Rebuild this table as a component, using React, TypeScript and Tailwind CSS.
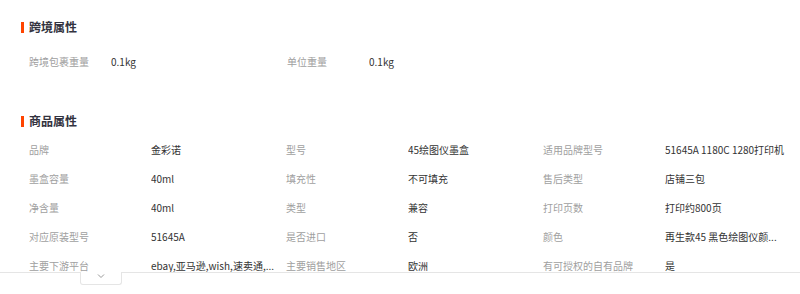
import React from "react";

const font = { fontFamily: '"Microsoft YaHei", "Noto Sans CJK SC", "Noto Sans", sans-serif' };

function Header({ title }: { title: string }) {
  return (
    <div className="flex items-center h-[20px] pl-[21px]">
      <span className="w-[3px] h-[11px] bg-[#ff4400] mr-[5px]" />
      <span className="text-[12px] font-bold text-[#333340] leading-[20px]">{title}</span>
    </div>
  );
}

type Item = [string, string];

function Cell({ item, labelW }: { item: Item; labelW: string }) {
  return (
    <div className="flex w-[258px] items-center">
      <span className={`${labelW} shrink-0 text-[#a0a0a0] whitespace-nowrap`}>{item[0]}</span>
      <span className="w-[134px] whitespace-nowrap overflow-hidden text-[#333333]">{item[1]}</span>
    </div>
  );
}

const cross: Item[] = [
  ["跨境包裹重量", "0.1kg"],
  ["单位重量", "0.1kg"],
];

const goods: Item[][] = [
  [["品牌", "金彩诺"], ["型号", "45绘图仪墨盒"], ["适用品牌型号", "51645A 1180C 1280打印机"]],
  [["墨盒容量", "40ml"], ["填充性", "不可填充"], ["售后类型", "店铺三包"]],
  [["净含量", "40ml"], ["类型", "兼容"], ["打印页数", "打印约800页"]],
  [["对应原装型号", "51645A"], ["是否进口", "否"], ["颜色", "再生款45 黑色绘图仪颜..."]],
  [["主要下游平台", "ebay,亚马逊,wish,速卖通,..."], ["主要销售地区", "欧洲"], ["有可授权的自有品牌", "是"]],
];

export default function App() {
  return (
    <div className="w-[800px] h-[294px] bg-white overflow-hidden text-[10px] leading-[14px]" style={font}>
      <div className="h-[272px] overflow-hidden pt-[17px]">
        <Header title="跨境属性" />
        <div className="flex pl-[29px] h-[29px] items-center mt-[10px]">
          {cross.map((c, i) => (
            <Cell key={i} item={c} labelW="w-[82px]" />
          ))}
        </div>
        <div className="mt-[35px]">
          <Header title="商品属性" />
          <div className="mt-[4px] flex flex-col">
            {goods.map((row, r) => (
              <div key={r} className="flex pl-[29px] h-[29px] items-center">
                {row.map((c, i) => (
                  <Cell key={i} item={c} labelW="w-[122px]" />
                ))}
              </div>
            ))}
          </div>
        </div>
      </div>
      <div className="flex">
        <div className="w-[80px] border-t border-[#e5e5e5]" />
        <div className="w-[42px] h-[13px] border-x border-b border-[#e5e5e5] rounded-b-[3px] flex items-start justify-center pt-[1px]">
          <svg width="8" height="6" viewBox="0 0 8 6" fill="none">
            <path d="M1 1.5 L4 4.5 L7 1.5" stroke="#999" strokeWidth="1" />
          </svg>
        </div>
        <div className="flex-1 border-t border-[#e5e5e5]" />
      </div>
    </div>
  );
}
